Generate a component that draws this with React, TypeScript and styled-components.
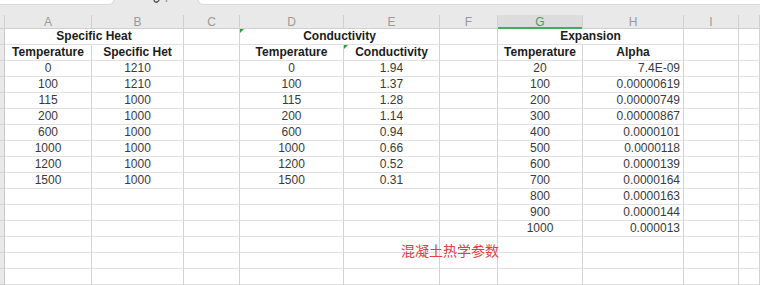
import React from "react";
import styled, { createGlobalStyle } from "styled-components";

const GlobalStyle = createGlobalStyle`
  html, body { margin: 0; padding: 0; background: #ffffff; }
  body {
    font-family: "Liberation Sans", "Noto Sans CJK SC", sans-serif;
    overflow: hidden;
    width: 760px;
    height: 285px;
  }
`;

const COLS = "5px 87px 92px 56px 104px 96px 58px 85px 101px 55px 1fr";
const VLINE = "#d3d3d3";
const HLINE = "#e0e0e0";

const Page = styled.div`
  width: 760px;
  height: 285px;
  overflow: hidden;
  background: #fff;
`;

const TabStrip = styled.div`
  display: flex;
  align-items: flex-start;
  height: 14px;
  background: #e9e9e9;
`;

const Tab = styled.div<{ $w: number; $side: "left" | "right" }>`
  width: ${(p) => p.$w}px;
  height: 4px;
  background: #ffffff;
  border-bottom: 1px solid #d8d8d8;
  ${(p) =>
    p.$side === "left"
      ? "border-right: 1px solid #d8d8d8; border-bottom-right-radius: 5px;"
      : "border-left: 1px solid #d8d8d8; border-bottom-left-radius: 5px;"}
  flex: ${(p) => (p.$w === 0 ? "1" : "none")};
`;

const TabGap = styled.div`
  width: 76px;
  height: 4px;
  display: flex;
  align-items: flex-start;
  justify-content: center;
  gap: 4px;
  padding-left: 8px;
`;

const ColHeader = styled.div`
  display: grid;
  grid-template-columns: ${COLS};
  height: 14px;
  background: #e9e9e9;
  border-bottom: 1px solid #cfcfcf;
  box-sizing: content-box;
`;

const ColLetter = styled.div<{ $active?: boolean }>`
  box-sizing: border-box;
  border-right: 1px solid #d0d0d0;
  font-family: "Liberation Sans", "Noto Sans", sans-serif;
  font-size: 12px;
  line-height: 14px;
  text-align: center;
  color: ${(p) => (p.$active ? "#4f9a62" : "#9a9a9a")};
  background: ${(p) => (p.$active ? "#dcdcdc" : "transparent")};
  box-shadow: ${(p) => (p.$active ? "inset 0 -2px 0 #3fae5c" : "none")};
  margin-top: 1px;
`;

const Body = styled.div`
  position: relative;
  display: grid;
  grid-template-columns: ${COLS};
  grid-auto-rows: 16px;
`;

const RowHead = styled.div`
  box-sizing: border-box;
  background: #e9e9e9;
  border-right: 1px solid #c9c9c9;
  border-bottom: 1px solid #d4d4d4;
`;

const Cell = styled.div<{
  $align: "left" | "center" | "right";
  $bold?: boolean;
  $span?: number;
  $flag?: boolean;
}>`
  position: relative;
  box-sizing: border-box;
  grid-column: span ${(p) => p.$span ?? 1};
  border-right: 1px solid ${VLINE};
  border-bottom: 1px solid ${HLINE};
  padding: 0 3px;
  font-size: 12px;
  line-height: 15px;
  white-space: nowrap;
  text-align: ${(p) => p.$align};
  font-weight: ${(p) => (p.$bold ? 700 : 400)};
  color: ${(p) => (p.$bold ? "#1c1c1c" : "#3a3a3a")};

  ${(p) =>
    p.$flag
      ? `&::before {
          content: "";
          position: absolute;
          top: 0;
          left: 0;
          border-top: 4px solid #2e9a3c;
          border-right: 4px solid transparent;
        }`
      : ""}
`;

const Note = styled.div`
  position: absolute;
  left: 401px;
  top: 213px;
  font-family: "Noto Sans CJK SC", sans-serif;
  font-size: 14px;
  line-height: 16px;
  color: #e5403c;
  white-space: nowrap;
`;

type Spec = {
  v?: string;
  a?: "left" | "center" | "right";
  b?: boolean;
  s?: number;
  f?: boolean;
};

const tempsA = ["0", "100", "115", "200", "600", "1000", "1200", "1500"];
const heat = ["1210", "1210", "1000", "1000", "1000", "1000", "1000", "1000"];
const cond = ["1.94", "1.37", "1.28", "1.14", "0.94", "0.66", "0.52", "0.31"];
const tempsG = ["20", "100", "200", "300", "400", "500", "600", "700", "800", "900", "1000"];
const alpha = [
  "7.4E-09",
  "0.00000619",
  "0.00000749",
  "0.00000867",
  "0.0000101",
  "0.0000118",
  "0.0000139",
  "0.0000164",
  "0.0000163",
  "0.0000144",
  "0.000013",
];

const buildRows = (): Spec[][] => {
  const rows: Spec[][] = [];
  rows.push([
    { v: "Specific Heat", a: "center", b: true, s: 2 },
    {},
    { v: "Conductivity", a: "center", b: true, s: 2, f: true },
    {},
    { v: "Expansion", a: "center", b: true, s: 2 },
    {},
    {},
  ]);
  rows.push([
    { v: "Temperature", a: "center", b: true },
    { v: "Specific Het", a: "center", b: true },
    {},
    { v: "Temperature", a: "center", b: true },
    { v: "Conductivity", a: "center", b: true, f: true },
    {},
    { v: "Temperature", a: "center", b: true },
    { v: "Alpha", a: "center", b: true },
    {},
    {},
  ]);
  for (let i = 0; i < 14; i++) {
    const has1 = i < 8;
    const has2 = i < 11;
    rows.push([
      { v: has1 ? tempsA[i] : "", a: "center" },
      { v: has1 ? heat[i] : "", a: "center" },
      {},
      { v: has1 ? tempsA[i] : "", a: "center" },
      { v: has1 ? cond[i] : "", a: "center" },
      {},
      { v: has2 ? tempsG[i] : "", a: "center" },
      { v: has2 ? alpha[i] : "", a: "right" },
      {},
      {},
    ]);
  }
  return rows;
};

const letters = ["A", "B", "C", "D", "E", "F", "G", "H", "I", ""];

export default function App() {
  const rows = buildRows();
  return (
    <Page>
      <GlobalStyle />
      <TabStrip>
        <Tab $w={113} $side="left" />
        <TabGap>
          <svg width="8" height="3" viewBox="0 0 8 3">
            <path d="M1 0 Q2 3 4 2 Q6 1 6 0" stroke="#555" strokeWidth="1.4" fill="none" />
          </svg>
          <svg width="3" height="3" viewBox="0 0 3 3">
            <circle cx="1.5" cy="1" r="0.9" fill="#999" />
          </svg>
        </TabGap>
        <Tab $w={0} $side="right" />
      </TabStrip>
      <ColHeader>
        <ColLetter />
        {letters.map((l, i) => (
          <ColLetter key={i} $active={l === "G"}>
            {l}
          </ColLetter>
        ))}
      </ColHeader>
      <Body>
        {rows.map((r, ri) => (
          <React.Fragment key={ri}>
            <RowHead />
            {r.map((c, ci) => (
              <Cell key={ci} $align={c.a ?? "left"} $bold={c.b} $span={c.s} $flag={c.f}>
                {c.v}
              </Cell>
            ))}
          </React.Fragment>
        ))}
        <Note>混凝土热学参数</Note>
      </Body>
    </Page>
  );
}
